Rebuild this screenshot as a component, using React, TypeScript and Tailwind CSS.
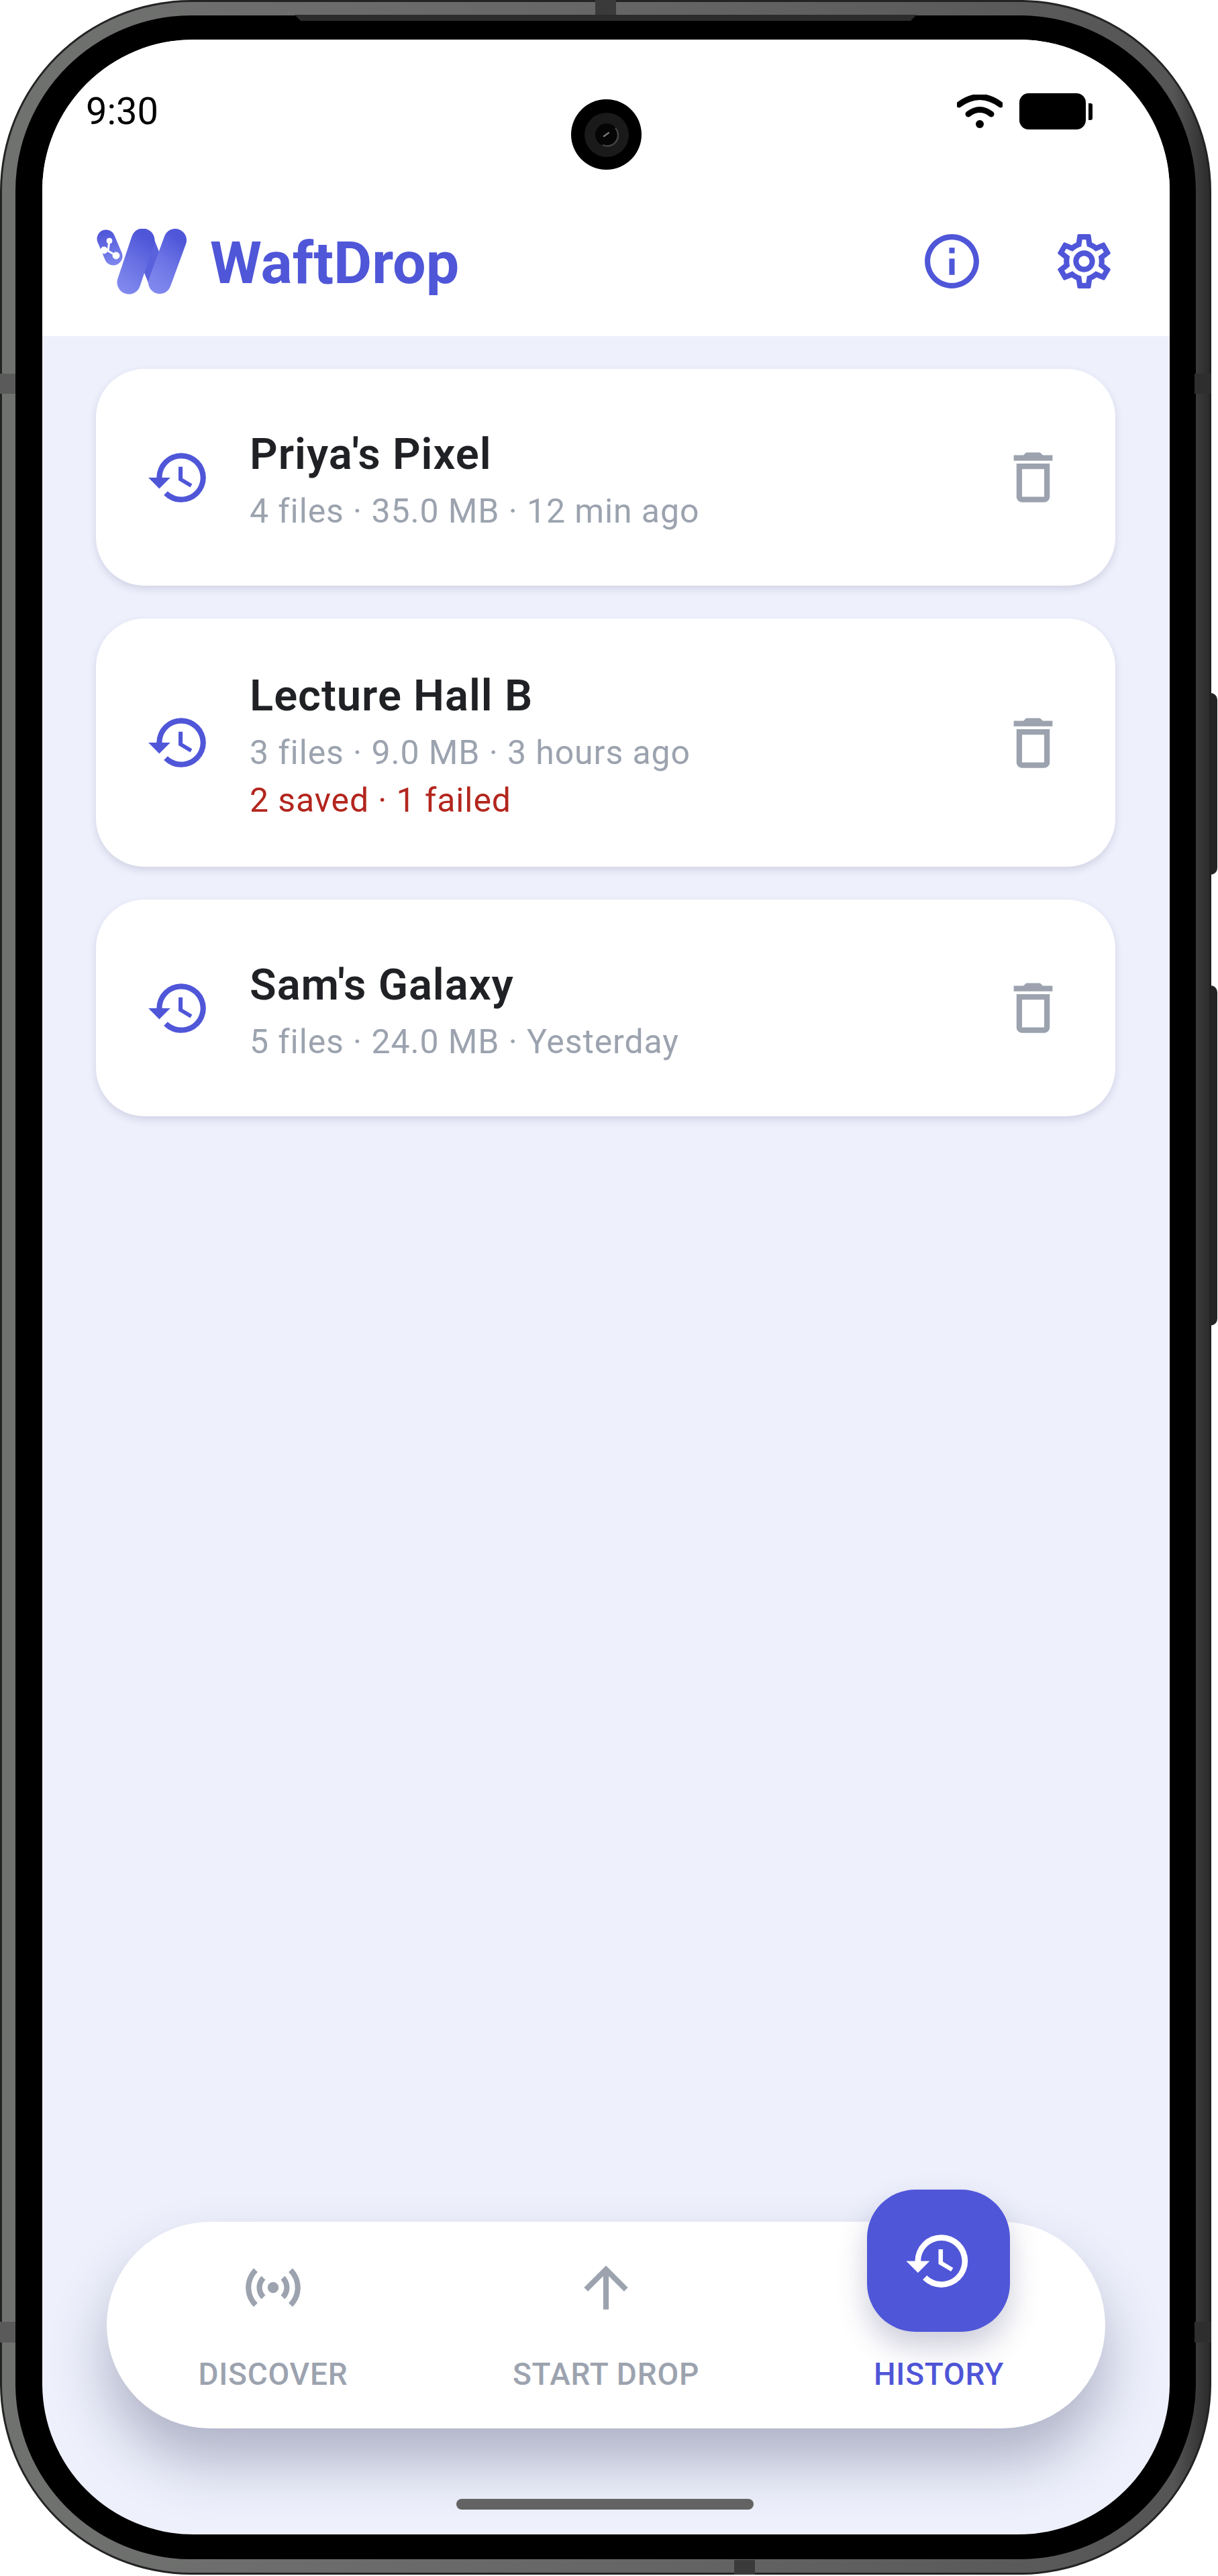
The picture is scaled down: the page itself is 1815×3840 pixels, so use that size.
import { MdArrowUpward, MdHistory, MdOutlineDelete, MdOutlineInfo, MdOutlineSettings, MdSensors } from "react-icons/md";

const font = "font-['Roboto',sans-serif]";

const drops = [
  { id: "priya", name: "Priya's Pixel", meta: "4 files · 35.0 MB · 12 min ago" },
  { id: "lecture", name: "Lecture Hall B", meta: "3 files · 9.0 MB · 3 hours ago", note: "2 saved · 1 failed" },
  { id: "sam", name: "Sam's Galaxy", meta: "5 files · 24.0 MB · Yesterday" },
];

function Logo() {
  return (
    <svg width="136" height="98" viewBox="0 0 136 98" className="shrink-0">
      <defs>
        <linearGradient id="wd-a" gradientUnits="userSpaceOnUse" x1="15" y1="3" x2="26" y2="55">
          <stop offset="0" stopColor="#4f56d8" />
          <stop offset="1" stopColor="#8088ee" />
        </linearGradient>
        <linearGradient id="wd-b" gradientUnits="userSpaceOnUse" x1="90" y1="25" x2="40" y2="90">
          <stop offset="0" stopColor="#4f56d8" />
          <stop offset="0.5" stopColor="#6a72e4" />
          <stop offset="1" stopColor="#8088ee" />
        </linearGradient>
        <linearGradient id="wd-c" gradientUnits="userSpaceOnUse" x1="138" y1="25" x2="88" y2="90">
          <stop offset="0" stopColor="#4f56d8" />
          <stop offset="0.5" stopColor="#6d75e6" />
          <stop offset="1" stopColor="#8088ee" />
        </linearGradient>
      </defs>
      <line x1="15" y1="15" x2="26" y2="41" stroke="url(#wd-a)" strokeWidth="27" strokeLinecap="round" />
      <line x1="70" y1="17" x2="95" y2="80" stroke="#5a61dc" strokeWidth="32" strokeLinecap="round" />
      <line x1="70" y1="17" x2="49" y2="80" stroke="url(#wd-b)" strokeWidth="35" strokeLinecap="round" />
      <line x1="118" y1="17" x2="95" y2="80" stroke="url(#wd-c)" strokeWidth="34" strokeLinecap="round" />
      <g fill="#fff" stroke="#fff">
        <circle cx="20" cy="18" r="4" />
        <circle cx="12" cy="32" r="5" />
        <circle cx="30" cy="40" r="5" />
        <path d="M20 18 L18 33 L30 40 M12 32 L18 33" strokeWidth="3" fill="none" />
      </g>
    </svg>
  );
}

function Camera() {
  return (
    <div className="absolute left-[788px] top-[89px] flex h-[105px] w-[105px] items-center justify-center rounded-full bg-black">
      <div className="flex h-[66px] w-[66px] items-center justify-center rounded-full bg-[#1a1a1a]">
        <svg width="36" height="36" viewBox="0 0 36 36">
          <circle cx="18" cy="18" r="17" fill="#050505" />
          <path d="M31 8 A16 16 0 0 1 12 33" fill="none" stroke="#444" strokeWidth="2.5" />
          <path d="M14 20 L21 15" stroke="#777" strokeWidth="2.5" strokeLinecap="round" />
        </svg>
      </div>
    </div>
  );
}

function StatusBar() {
  return (
    <div className="flex h-[140px] items-start justify-between pl-[65px] pr-[115px] pt-[74px]">
      <span className="text-[56px] leading-[66px] text-black">9:30</span>
      <div className="flex items-center gap-[25px] pt-[6px]">
        <svg width="68" height="50" viewBox="0 0 68 50">
          <path d="M3 15 Q34 -8 65 15" fill="none" stroke="#000" strokeWidth="9" strokeLinecap="round" />
          <path d="M17 29 Q34 16 51 29" fill="none" stroke="#000" strokeWidth="9" strokeLinecap="round" />
          <circle cx="34" cy="44" r="6" fill="#000" />
        </svg>
        <div className="flex items-center gap-[4px]">
          <div className="h-[54px] w-[99px] rounded-[14px] bg-black" />
          <div className="h-[25px] w-[6px] rounded-r-[3px] bg-black" />
        </div>
      </div>
    </div>
  );
}

function AppBar() {
  return (
    <div className="flex h-[302px] items-start justify-between pl-[80px] pr-[79px] pt-[140px]">
      <div className="flex items-center gap-[34px]">
        <Logo />
        <span className="mt-[4px] text-[88px] font-bold leading-[98px] text-[#4f56d8]">WaftDrop</span>
      </div>
      <div className="flex items-center gap-[100px] pt-[2px]">
        <MdOutlineInfo className="h-[97px] w-[97px] text-[#4f56d8]" />
        <MdOutlineSettings className="h-[97px] w-[97px] text-[#4f56d8]" />
      </div>
    </div>
  );
}

function DropCard({ name, meta, note }: { name: string; meta: string; note?: string }) {
  return (
    <div className="flex min-h-[323px] items-center rounded-[72px] bg-white py-[66px] pl-[74px] pr-[73px] shadow-[0_5px_12px_rgba(60,64,110,0.16)]">
      <MdHistory className="h-[98px] w-[98px] shrink-0 text-[#4f56d8]" />
      <div className="ml-[57px] flex-1 pt-[8px]">
        <div className="text-[65px] font-semibold leading-[82px] tracking-[1px] text-[#1f2124]">{name}</div>
        <div className="mt-[11px] text-[50px] leading-[66px] tracking-[0.9px] text-[#9ca3af]">{meta}</div>
        {note && <div className="mt-[5px] text-[50px] leading-[66px] tracking-[0.9px] text-[#b3261e]">{note}</div>}
      </div>
      <MdOutlineDelete className="h-[99px] w-[99px] shrink-0 text-[#9ca3af]" />
    </div>
  );
}

function NavItem({ label, icon, active }: { label: string; icon?: React.ReactNode; active?: boolean }) {
  return (
    <div className="flex flex-1 flex-col items-center">
      <div className="flex h-[196px] items-center justify-center">{icon}</div>
      <span className={`mt-[4px] text-[46px] font-medium leading-[54px] tracking-[0.8px] ${active ? "text-[#4f56d8]" : "text-[#9ca3af]"}`}>
        {label}
      </span>
    </div>
  );
}

function BottomNav() {
  return (
    <div className="absolute bottom-[158px] left-[96px] right-[96px] flex h-[308px] rounded-[154px] bg-white shadow-[0_50px_84px_rgba(50,54,90,0.33)]">
      <NavItem label="DISCOVER" icon={<MdSensors className="h-[98px] w-[98px] text-[#9ca3af]" />} />
      <NavItem label="START DROP" icon={<MdArrowUpward className="h-[98px] w-[98px] text-[#9ca3af]" />} />
      <NavItem label="HISTORY" active />
      <div className="absolute left-[1133px] top-[-48px] flex h-[212px] w-[213px] items-center justify-center rounded-[72px] bg-[#4f56d8] shadow-[0_22px_44px_rgba(50,54,110,0.25)]">
        <MdHistory className="h-[105px] w-[105px] text-white" />
      </div>
    </div>
  );
}

function Screen() {
  return (
    <div className={`relative h-[3719px] w-[1680px] overflow-hidden rounded-[225px] bg-[#eef0fc] ${font}`}>
      <div className="bg-white">
        <StatusBar />
        <AppBar />
      </div>
      <div className="flex flex-col gap-[49px] pl-[80px] pr-[81px] pt-[49px]">
        {drops.map((d) => (
          <DropCard key={d.id} name={d.name} meta={d.meta} note={d.note} />
        ))}
      </div>
      <BottomNav />
      <Camera />
      <div className="absolute bottom-[37px] left-[617px] h-[16px] w-[443px] rounded-full bg-[#636363]" />
    </div>
  );
}

export default function App() {
  return (
    <div className="relative h-[3840px] w-[1815px] overflow-hidden bg-white">
      {/* side buttons */}
      <div className="absolute left-[1800px] top-[1033px] h-[271px] w-[14px] rounded-r-[10px] bg-[#242424]" />
      <div className="absolute left-[1800px] top-[1469px] h-[507px] w-[14px] rounded-r-[10px] bg-[#242424]" />

      <div className="relative h-[3838px] w-[1805px] rounded-[285px] bg-[#232323] p-[3px]">
        <div className="h-full w-full rounded-[282px] bg-[linear-gradient(90deg,#707270_0%,#666666_50%,#555555_97%,#2c2c2c_100%)] p-[20px]">
          <div className="flex h-full w-full items-start justify-center rounded-[262px] bg-black pl-[1px] pt-[36px]">
            <Screen />
          </div>
        </div>

        {/* frame seams */}
        <div className="absolute left-[887px] top-0 h-[22px] w-[31px] bg-[#3a3a3a]" />
        <div className="absolute bottom-0 left-[1094px] h-[22px] w-[31px] bg-[#3a3a3a]" />
        <div className="absolute right-0 top-[557px] h-[30px] w-[25px] bg-[#2e2e2e]" />
        <div className="absolute right-0 top-[3461px] h-[31px] w-[25px] bg-[#2e2e2e]" />
        <div className="absolute left-0 top-[557px] h-[30px] w-[23px] bg-[#5a5a5a]" />
        <div className="absolute left-0 top-[3461px] h-[31px] w-[23px] bg-[#5a5a5a]" />

        {/* speaker */}
        <svg className="absolute left-[439px] top-[22px]" width="927" height="9" viewBox="0 0 927 9">
          <polygon points="0,0 927,0 918,9 9,9" fill="#2c2c2c" />
        </svg>
      </div>
    </div>
  );
}
